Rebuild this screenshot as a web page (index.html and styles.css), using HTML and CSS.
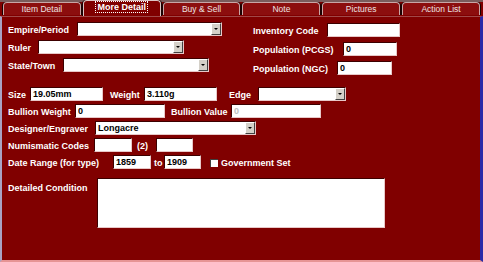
FILE: index.html
```html
<!DOCTYPE html>
<html lang="en">
<head>
    <meta charset="UTF-8">
    <title>Coin Details</title>
    <link rel="stylesheet" href="styles.css">
</head>
<body>
    <div class="window">
        <!-- Вкладки -->
        <div class="tabs">
            <div class="tab">Item Detail</div>
            <div class="tab active"><span>More Detail</span></div>
            <div class="tab">Buy &amp; Sell</div>
            <div class="tab">Note</div>
            <div class="tab">Pictures</div>
            <div class="tab">Action List</div>
        </div>

        <div class="panel">
            <!-- Верхний блок: две колонки -->
            <div class="top">
                <div class="col">
                    <div class="row">
                        <label class="lbl l-empire">Empire/Period</label>
                        <span class="combo c-empire"><select></select></span>
                    </div>
                    <div class="row">
                        <label class="lbl l-ruler">Ruler</label>
                        <span class="combo c-ruler"><select></select></span>
                    </div>
                    <div class="row">
                        <label class="lbl l-state">State/Town</label>
                        <span class="combo c-state"><select></select></span>
                    </div>
                </div>
                <div class="col col-right">
                    <div class="row">
                        <label class="lbl l-inv">Inventory Code</label>
                        <input class="field f-inv" type="text">
                    </div>
                    <div class="row">
                        <label class="lbl l-pcgs">Population (PCGS)</label>
                        <input class="field f-pcgs" type="text" value="0">
                    </div>
                    <div class="row">
                        <label class="lbl l-ngc">Population (NGC)</label>
                        <input class="field f-ngc" type="text" value="0">
                    </div>
                </div>
            </div>

            <!-- Нижний блок -->
            <div class="bottom">
                <div class="row">
                    <label class="lbl l-size">Size</label>
                    <input class="field f-73" type="text" value="19.05mm">
                    <label class="lbl l-weight">Weight</label>
                    <input class="field f-73" type="text" value="3.110g">
                    <label class="lbl l-edge">Edge</label>
                    <span class="combo c-edge"><select></select></span>
                </div>
                <div class="row">
                    <label class="lbl l-bweight">Bullion Weight</label>
                    <input class="field f-90" type="text" value="0">
                    <label class="lbl l-bvalue">Bullion Value</label>
                    <input class="field f-90" type="text" value="0" disabled>
                </div>
                <div class="row">
                    <label class="lbl l-designer">Designer/Engraver</label>
                    <span class="combo c-designer"><select><option>Longacre</option></select></span>
                </div>
                <div class="row">
                    <label class="lbl l-numis">Numismatic Codes</label>
                    <input class="field f-38" type="text">
                    <label class="lbl l-two">(2)</label>
                    <input class="field f-37" type="text">
                </div>
                <div class="row">
                    <label class="lbl l-date">Date Range (for type)</label>
                    <input class="field f-38" type="text" value="1859">
                    <label class="lbl l-to">to</label>
                    <input class="field f-37" type="text" value="1909">
                    <span class="check"></span>
                    <label class="lbl l-gov">Government Set</label>
                </div>
                <div class="row row-cond">
                    <label class="lbl l-cond">Detailed Condition</label>
                    <textarea class="memo"></textarea>
                </div>
            </div>
        </div>
    </div>
</body>
</html>
```

FILE: styles.css
```css
body {
    margin: 0;
    padding: 0;
    background-color: #800000;
    font-family: "Liberation Sans", Arial, sans-serif;
}
.window {
    width: 483px;
    height: 262px;
    display: flex;
    flex-direction: column;
    background-color: #800000;
    overflow: hidden;
}

/* tabs */
.tabs {
    height: 16px;
    display: flex;
    align-items: flex-end;
    gap: 2px;
    padding: 0 3px 0 3px;
    background: linear-gradient(#7a5c5c 0, #7a5c5c 2px, #800000 2px);
}
.tab {
    flex: 1;
    height: 13px;
    margin-bottom: 1px;
    box-sizing: border-box;
    border: 1px solid #c9a6a6;
    border-bottom: none;
    border-radius: 4px 4px 0 0;
    box-shadow: -1px 0 0 #1a0000, 1px 0 0 #1a0000;
    background-color: #8c0e0e;
    color: #ece2e2;
    font-size: 8.5px;
    line-height: 12px;
    text-align: center;
}
.tab.active {
    height: 16px;
    margin-bottom: 0;
    background-color: #800000;
    border-color: #dcc4c4;
    color: #fff;
    font-size: 9px;
    font-weight: bold;
    line-height: 13px;
}
.tab.active span {
    border: 1px dotted #fff;
    padding: 0 1px;
}

/* panel */
.panel {
    flex: 1;
    border-left: 2px solid #a9a2c4;
    border-right: 3px solid #2a2aa8;
    border-bottom: 2px solid #e69494;
    border-top: 1px solid #a04848;
    padding: 5px 0 0 6px;
}
.top {
    display: flex;
}
.col {
    flex: none;
    width: 245px;
    display: flex;
    flex-direction: column;
    gap: 4px;
}
.col-right {
    flex: 1;
    padding-top: 1px;
    gap: 5px;
}
.bottom {
    margin-top: 12px;
    display: flex;
    flex-direction: column;
    gap: 3px;
}
.row {
    height: 14px;
    display: flex;
    align-items: center;
}
.row-cond {
    height: 50px;
    align-items: flex-start;
    margin-top: 6px;
}

.lbl {
    flex: none;
    color: #fff;
    font-size: 9px;
    font-weight: bold;
    line-height: 14px;
    padding-top: 2px;
    white-space: nowrap;
}
.row-cond .lbl {
    padding-top: 3px;
}
.l-empire { width: 69px; }
.l-ruler { width: 30px; }
.l-state { width: 55px; }
.l-inv { width: 74px; }
.l-pcgs { width: 90px; }
.l-ngc { width: 84px; }
.l-size { width: 22px; }
.l-weight { width: 34px; margin-left: 7px; }
.l-edge { width: 29px; margin-left: 12px; }
.l-bweight { width: 67px; }
.l-bvalue { width: 60px; margin-left: 6px; }
.l-designer { width: 87px; }
.l-numis { width: 86px; }
.l-two { width: 19px; margin-left: 5px; }
.l-date { width: 105px; }
.l-to { width: 10px; margin-left: 3px; }
.l-gov { margin-left: 3px; }
.l-cond { width: 89px; }

/* inputs */
.field, .combo, .memo {
    flex: none;
    box-sizing: border-box;
    height: 14px;
    margin: 0;
    padding: 0 0 0 2px;
    background-color: #fff;
    border: 1px solid;
    border-color: #3c0000 #e8c8c8 #e8c8c8 #3c0000;
    color: #000;
    font-family: "Liberation Sans", Arial, sans-serif;
    font-size: 9px;
    font-weight: bold;
    line-height: 12px;
    outline: none;
}
.field:disabled {
    color: #c0c0c0;
}
.f-inv { width: 73px; }
.f-pcgs { width: 54px; }
.f-ngc { width: 55px; }
.f-73 { width: 73px; }
.f-90 { width: 90px; }
.f-38 { width: 38px; }
.f-37 { width: 37px; }
.memo {
    width: 288px;
    height: 50px;
    resize: none;
}

.combo {
    position: relative;
    padding: 0;
}
.combo select {
    appearance: none;
    -webkit-appearance: none;
    width: 100%;
    height: 12px;
    border: none;
    margin: 0;
    padding: 0 0 0 2px;
    background: transparent;
    font: inherit;
    color: #000;
    outline: none;
}
.combo::after {
    content: "";
    position: absolute;
    top: 0;
    right: 0;
    width: 10px;
    height: 12px;
    box-sizing: border-box;
    border: 1px solid;
    border-color: #fff #404040 #404040 #fff;
    background-color: #d4d0c8;
}
.combo::before {
    content: "";
    position: absolute;
    z-index: 1;
    top: 5px;
    right: 3px;
    border-left: 2px solid transparent;
    border-right: 2px solid transparent;
    border-top: 2px solid #000;
}
.c-empire { width: 145px; }
.c-ruler { width: 146px; }
.c-state { width: 146px; }
.c-edge { width: 88px; }
.c-designer { width: 161px; }

.check {
    flex: none;
    width: 8px;
    height: 8px;
    margin-left: 9px;
    margin-top: 2px;
    background-color: #fff;
    border-top: 1px solid #404040;
    border-left: 1px solid #404040;
    box-sizing: border-box;
}
```
